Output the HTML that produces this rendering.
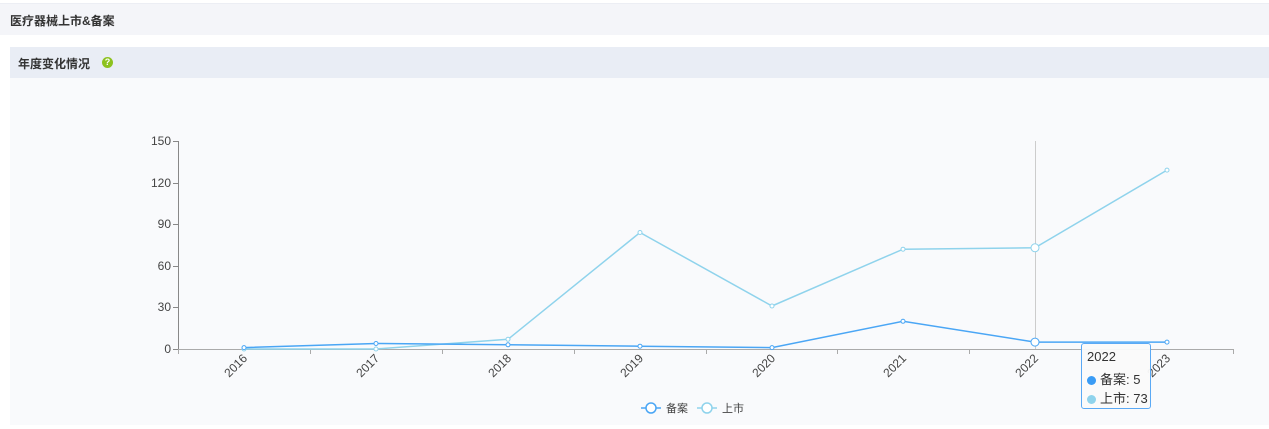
<!DOCTYPE html>
<html><head><meta charset="utf-8"><style>
body{margin:0;width:1269px;height:429px;background:#fff;font-family:"Liberation Sans","Noto Sans CJK SC",sans-serif;overflow:hidden;position:relative}
.top{position:absolute;left:0;top:3px;width:1269px;height:31px;background:#f4f5f9;border-top:1px solid #eceef4}
.top span{position:absolute;left:10px;top:8px;font-size:12px;font-weight:bold;color:#333}
.hd{position:absolute;left:10px;top:47px;width:1259px;height:31px;background:#e9edf5}
.hd span{position:absolute;left:8px;top:8px;font-size:12px;font-weight:bold;color:#333}
.q{position:absolute;left:92px;top:10px;width:11px;height:11px;border-radius:50%;background:#8dc21f;color:#fff;font-size:9px;line-height:11px;text-align:center;font-weight:bold}
.ch{position:absolute;left:10px;top:78px;width:1259px;height:347px;background:#f9fafc}
svg{position:absolute;left:0;top:0}
.tip{position:absolute;left:1081px;top:343px;width:68px;height:64px;border:1px solid #5aa9f5;border-radius:3px;background:rgba(250,250,250,0.95);font-size:13px;color:#333}
.tip div{position:absolute;left:5px}
.dot{display:inline-block;width:9px;height:9px;border-radius:50%;margin-right:4px;vertical-align:-1px}
</style></head><body>
<div class="top"><span>医疗器械上市&amp;备案</span></div>
<div class="hd"><span>年度变化情况</span><div class="q">?</div></div>
<div class="ch"></div>
<svg width="1269" height="429" font-family="Liberation Sans,Noto Sans CJK SC,sans-serif">
<g stroke="#888" stroke-width="1" fill="none">
<line x1="178.5" y1="141" x2="178.5" y2="350"/>
<line x1="173" y1="141.5" x2="178" y2="141.5"/><line x1="173" y1="183.5" x2="178" y2="183.5"/><line x1="173" y1="224.5" x2="178" y2="224.5"/><line x1="173" y1="266.5" x2="178" y2="266.5"/><line x1="173" y1="307.5" x2="178" y2="307.5"/><line x1="173" y1="349.5" x2="178" y2="349.5"/>
</g>
<g stroke="#aaa"><line x1="178" y1="349.5" x2="1234" y2="349.5"/>
<line x1="178.5" y1="349" x2="178.5" y2="354"/><line x1="310.5" y1="349" x2="310.5" y2="354"/><line x1="442.5" y1="349" x2="442.5" y2="354"/><line x1="574.5" y1="349" x2="574.5" y2="354"/><line x1="706.5" y1="349" x2="706.5" y2="354"/><line x1="837.5" y1="349" x2="837.5" y2="354"/><line x1="969.5" y1="349" x2="969.5" y2="354"/><line x1="1101.5" y1="349" x2="1101.5" y2="354"/><line x1="1233.5" y1="349" x2="1233.5" y2="354"/></g>
<g font-size="12" fill="#444" text-anchor="end">
<text x="171" y="145">150</text><text x="171" y="187">120</text><text x="171" y="228">90</text><text x="171" y="270">60</text><text x="171" y="311">30</text><text x="171" y="353">0</text>
</g>
<g font-size="12" fill="#444" text-anchor="end">
<text transform="translate(248,359) rotate(-45)">2016</text>
<text transform="translate(380,359) rotate(-45)">2017</text>
<text transform="translate(512,359) rotate(-45)">2018</text>
<text transform="translate(644,359) rotate(-45)">2019</text>
<text transform="translate(776,359) rotate(-45)">2020</text>
<text transform="translate(907,359) rotate(-45)">2021</text>
<text transform="translate(1039,359) rotate(-45)">2022</text>
<text transform="translate(1171,359) rotate(-45)">2023</text>
</g>
<line x1="1035.5" y1="141" x2="1035.5" y2="349" stroke="#ccc"/>
<polyline fill="none" stroke="#8fd3ec" stroke-width="1.5" points="244,349 376,349 508,339.3 640,232.5 772,306 903,249.2 1035,247.8 1167,170.1"/>
<polyline fill="none" stroke="#4aa6f5" stroke-width="1.5" points="244,347.6 376,343.5 508,344.8 640,346.2 772,347.6 903,321.3 1035,342.1 1167,342.1"/>
<g fill="#fff" stroke="#8fd3ec"><circle cx="244" cy="349" r="2"/><circle cx="376" cy="349" r="2"/><circle cx="508" cy="339.3" r="2"/><circle cx="640" cy="232.5" r="2"/><circle cx="772" cy="306" r="2"/><circle cx="903" cy="249.2" r="2"/><circle cx="1035" cy="247.8" r="4"/><circle cx="1167" cy="170.1" r="2"/></g>
<g fill="#fff" stroke="#4aa6f5"><circle cx="244" cy="347.6" r="2"/><circle cx="376" cy="343.5" r="2"/><circle cx="508" cy="344.8" r="2"/><circle cx="640" cy="346.2" r="2"/><circle cx="772" cy="347.6" r="2"/><circle cx="903" cy="321.3" r="2"/><circle cx="1035" cy="342.1" r="4"/><circle cx="1167" cy="342.1" r="2"/></g>
<g font-size="11" fill="#444">
<line x1="641" y1="408" x2="661" y2="408" stroke="#4aa6f5" stroke-width="1.5"/><circle cx="651" cy="408" r="5" fill="#fff" stroke="#4aa6f5" stroke-width="1.5"/><text x="666" y="412">备案</text>
<line x1="697" y1="408" x2="717" y2="408" stroke="#8fd3ec" stroke-width="1.5"/><circle cx="707" cy="408" r="5" fill="#fff" stroke="#8fd3ec" stroke-width="1.5"/><text x="722" y="412">上市</text>
</g>
</svg>
<div class="tip">
<div style="top:5px">2022</div>
<div style="top:25px"><span class="dot" style="background:#3a9cf5"></span>备案: 5</div>
<div style="top:44px"><span class="dot" style="background:#8fd3ec"></span>上市: 73</div>
</div>
</body></html>
